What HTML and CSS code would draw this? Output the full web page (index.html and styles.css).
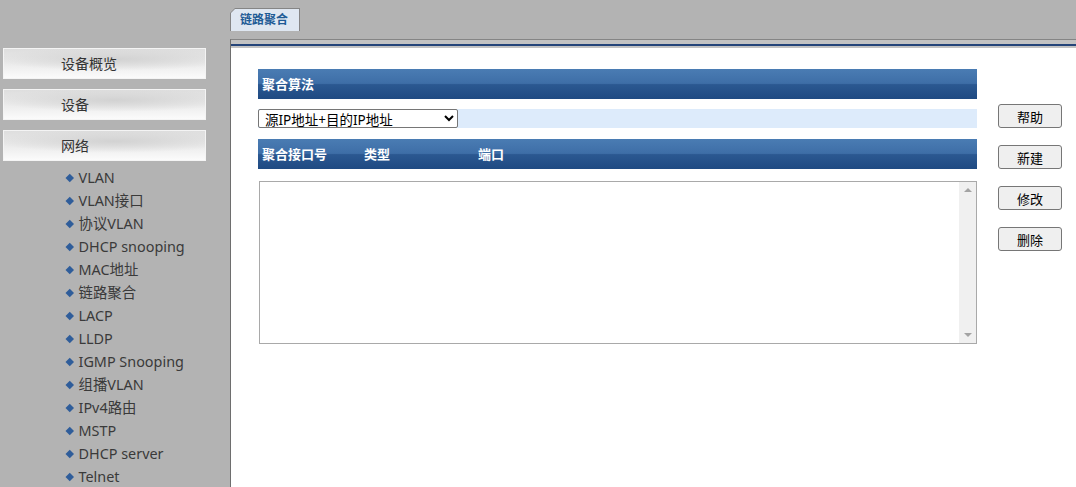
FILE: index.html
```html
<!DOCTYPE html>
<html lang="zh-CN">
<head>
  <meta charset="UTF-8">
  <meta name="viewport" content="width=device-width, initial-scale=1.0">
  <title>链路聚合</title>
  <link rel="stylesheet" href="styles.css">
</head>
<body>
  <div class="page">
    <aside class="sidebar">
      <div class="menu-btn">设备概览</div>
      <div class="menu-btn">设备</div>
      <div class="menu-btn">网络</div>
      <ul class="submenu">
        <li>VLAN</li>
        <li>VLAN接口</li>
        <li>协议VLAN</li>
        <li>DHCP snooping</li>
        <li>MAC地址</li>
        <li>链路聚合</li>
        <li>LACP</li>
        <li>LLDP</li>
        <li>IGMP Snooping</li>
        <li>组播VLAN</li>
        <li>IPv4路由</li>
        <li>MSTP</li>
        <li>DHCP server</li>
        <li>Telnet</li>
      </ul>
    </aside>

    <main class="main">
      <div class="tabs">
        <div class="tab"><span>链路聚合</span></div>
      </div>
      <div class="rule"><div class="rule-line"></div></div>

      <div class="content">
        <div class="panel">
          <div class="bar">聚合算法</div>
          <div class="algo-row">
            <select id="algo">
              <option value="sip-dip">源IP地址+目的IP地址</option>
              <option value="sip">源IP地址</option>
              <option value="dip">目的IP地址</option>
              <option value="smac-dmac">源MAC地址+目的MAC地址</option>
            </select>
          </div>
          <div class="bar cols">
            <span class="col-id">聚合接口号</span>
            <span class="col-type">类型</span>
            <span>端口</span>
          </div>
          <div class="listbox">
            <div class="list-body"></div>
            <div class="scrollbar">
              <span class="arrow up"></span>
              <span class="arrow down"></span>
            </div>
          </div>
        </div>

        <div class="actions">
          <button>帮助</button>
          <button>新建</button>
          <button>修改</button>
          <button>删除</button>
        </div>
      </div>
    </main>
  </div>
</body>
</html>
```

FILE: styles.css
```css
body {
  margin: 0;
  background-color: #b3b3b3;
  font-family: "Noto Sans", "Noto Sans CJK SC", sans-serif;
  font-size: 14px;
  color: #333;
}

.page {
  display: flex;
  height: 487px;
  overflow: hidden;
}

/* left menu */
.sidebar {
  width: 230px;
  flex-shrink: 0;
  padding-top: 48px;
}

.menu-btn {
  width: 201px;
  height: 29px;
  line-height: 29px;
  margin: 0 0 10px 3px;
  text-indent: 57px;
  border: 1px solid #f4f4f4;
  background: radial-gradient(ellipse 60% 40% at 55% 35%, #d2d2d2, rgba(210,210,210,0)),
              linear-gradient(#dedede, #ebebeb 50%, #fbfbfb);
  color: #333;
}

.submenu {
  list-style: none;
  margin: -5px 0 0;
  padding: 0 0 0 66px;
}

.submenu li {
  height: 23px;
  line-height: 23px;
  display: flex;
  align-items: center;
  color: #3a3a3a;
  font-size: 14.4px;
  white-space: nowrap;
}

.submenu li::before {
  content: "";
  width: 5.5px;
  height: 5.5px;
  margin: 0 6px 0 1px;
  background: #2f5d9a;
  transform: rotate(45deg);
}

/* right side */
.main {
  flex: 1;
  display: flex;
  flex-direction: column;
}

.tabs {
  height: 39px;
  padding-top: 8px;
  box-sizing: border-box;
}

.tab {
  display: inline-block;
  padding: 1px 1px 0 1px;
  background: #858585;
  clip-path: polygon(5px 0, 100% 0, 100% 100%, 0 100%, 0 5px);
}

.tab span {
  display: block;
  height: 22px;
  line-height: 22px;
  padding: 0 11px 0 9px;
  background: #dfe7f1;
  clip-path: polygon(4px 0, 100% 0, 100% 100%, 0 100%, 0 4px);
  color: #1f5c96;
  font-size: 12px;
  font-weight: bold;
}

.rule {
  border-top: 1px solid #858585;
  border-left: 1px solid #6e6e6e;
  background: #c3c3c3;
  padding: 4px 0 2px;
}

.rule-line {
  height: 2px;
  background: #25457a;
}

.content {
  flex: 1;
  display: flex;
  align-items: flex-start;
  background: #fff;
  border-left: 1px solid #6e6e6e;
  padding: 21px 0 0 27px;
}

.panel {
  width: 719px;
}

.bar {
  height: 30px;
  line-height: 30px;
  padding-left: 4px;
  background: linear-gradient(#4a7cb3 0%, #3e6ea7 48%, #2b5891 52%, #1f4a82 100%);
  color: #fff;
  font-size: 13px;
  font-weight: bold;
}

.algo-row {
  margin: 10px 0 11px;
  height: 19px;
  background: #ddebfb;
}

select {
  width: 200px;
  height: 19px;
  padding: 0 0 0 2px;
  border: 1px solid #767676;
  border-radius: 2px;
  background: #fff;
  font-family: "Noto Sans", "Noto Sans CJK SC", sans-serif;
  font-size: 13.5px;
  color: #000;
  box-sizing: border-box;
}

.cols {
  display: flex;
}

.col-id {
  width: 102px;
}

.col-type {
  width: 114px;
}

.listbox {
  display: flex;
  height: 161px;
  margin: 12px 0 0 1px;
  border: 1px solid #a9a9a9;
}

.list-body {
  flex: 1;
}

.scrollbar {
  width: 17px;
  background: #f0f0f0;
  display: flex;
  flex-direction: column;
  justify-content: space-between;
  align-items: center;
  padding: 6px 0;
}

.arrow {
  width: 0;
  height: 0;
  border-left: 4px solid transparent;
  border-right: 4px solid transparent;
}

.arrow.up {
  border-bottom: 4px solid #a3a3a3;
}

.arrow.down {
  border-top: 4px solid #a3a3a3;
}

.actions {
  display: flex;
  flex-direction: column;
  gap: 17px;
  margin: 35px 0 0 21px;
}

button {
  width: 64px;
  height: 24px;
  padding: 0;
  background-color: #efefef;
  border: 1px solid #767676;
  border-radius: 3px;
  font-family: "Noto Sans", "Noto Sans CJK SC", sans-serif;
  font-size: 13px;
  color: #000;
  cursor: pointer;
}

button:hover {
  background-color: #e5e5e5;
}
```
